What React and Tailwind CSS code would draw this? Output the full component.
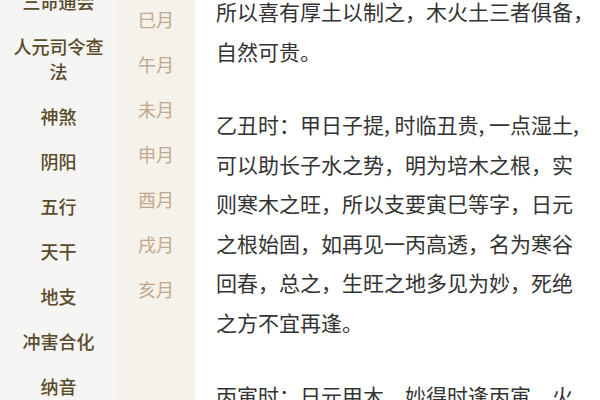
const MENU = [
  '三命通会',
  '人元司令查法',
  '神煞',
  '阴阳',
  '五行',
  '天干',
  '地支',
  '冲害合化',
  '纳音',
]

const MONTHS = ['巳月', '午月', '未月', '申月', '酉月', '戌月', '亥月']

const PARAGRAPHS = [
  ['所以喜有厚土以制之，木火土三者俱备，', '自然可贵。'],
  [
    '乙丑时：甲日子提, 时临丑贵, 一点湿土,',
    '可以助长子水之势，明为培木之根，实',
    '则寒木之旺，所以支要寅巳等字，日元',
    '之根始固，如再见一丙高透，名为寒谷',
    '回春，总之，生旺之地多见为妙，死绝',
    '之方不宜再逢。',
  ],
  ['丙寅时：日元甲木，妙得时逢丙寅，火'],
]

export default function App() {
  return (
    <div
      className="flex h-screen w-full overflow-hidden bg-white"
      style={{ fontFamily: '"Noto Sans CJK SC", "Noto Sans", sans-serif' }}
    >
      {/* 左侧分类 */}
      <div className="w-[117px] shrink-0 bg-[#f5f5f3]">
        <div className="-mt-[21px] flex flex-col">
          {MENU.map(item => (
            <div
              key={item}
              className="px-2 py-[10px] text-center text-[18px] leading-[25px] font-medium text-[#5a4a2c]"
            >
              {item}
            </div>
          ))}
        </div>
      </div>

      {/* 月份 */}
      <div className="w-[78px] shrink-0 bg-[#f5f1eb]">
        <div className="-mt-[3px] flex flex-col">
          {MONTHS.map(m => (
            <div
              key={m}
              className="h-[45px] flex items-center justify-center text-[18px] text-[#c2a98b]"
            >
              {m}
            </div>
          ))}
        </div>
      </div>

      {/* 正文 */}
      <div className="flex-1 overflow-hidden pl-[21px]">
        <div className="-mt-[8px] flex flex-col gap-[34px]">
          {PARAGRAPHS.map((lines, i) => (
            <div key={i}>
              {lines.map(line => (
                <div key={line} className="whitespace-nowrap text-[21px] leading-[39.5px] text-[#333333]">
                  {line}
                </div>
              ))}
            </div>
          ))}
        </div>
      </div>
    </div>
  )
}
